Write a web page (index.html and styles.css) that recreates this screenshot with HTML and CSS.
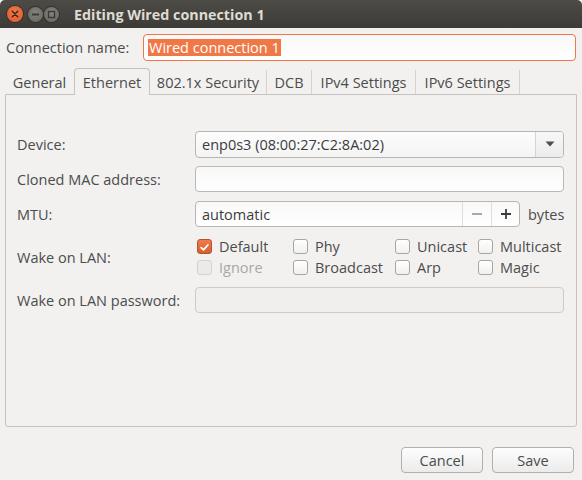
FILE: index.html
```html
<!DOCTYPE html>
<html>
<head>
<meta charset="utf-8">
<link rel="stylesheet" href="styles.css">
</head>
<body>
<div class="window">
  <header class="titlebar">
    <div class="wm-buttons">
      <span class="wm close"><svg width="16" height="16" viewBox="0 0 16 16"><path d="M5.3 5.3 L10.7 10.7 M10.7 5.3 L5.3 10.7" stroke="#3a2a22" stroke-width="1.6" stroke-linecap="round"/></svg></span>
      <span class="wm min"><svg width="15" height="15" viewBox="0 0 15 15"><path d="M4 7.5 H11" stroke="#3c3b37" stroke-width="2"/></svg></span>
      <span class="wm max"><svg width="15" height="15" viewBox="0 0 15 15"><rect x="4.5" y="4.5" width="6" height="6" fill="none" stroke="#3c3b37" stroke-width="1.4"/></svg></span>
    </div>
    <div class="title">Editing Wired connection 1</div>
  </header>

  <div class="name-row">
    <span class="name-label">Connection name:</span>
    <div class="entry focused"><span class="selection">Wired connection 1</span></div>
  </div>

  <div class="notebook">
    <div class="tabs">
      <div class="tab w-general">General</div>
      <div class="tab active w-ethernet">Ethernet</div>
      <div class="tab sep w-security">802.1x Security</div>
      <div class="tab sep w-dcb">DCB</div>
      <div class="tab sep w-ipv4">IPv4 Settings</div>
      <div class="tab sep w-ipv6">IPv6 Settings</div>
    </div>
    <div class="page">
      <div class="form">
        <div class="label">Device:</div>
        <div class="combo">
          <span class="combo-text">enp0s3 (08:00:27:C2:8A:02)</span>
          <span class="combo-btn"><svg width="10" height="6" viewBox="0 0 10 6"><path d="M0.5 0.5 H9.5 L5 5.5 Z" fill="#4c4c4c"/></svg></span>
        </div>

        <div class="label">Cloned MAC address:</div>
        <div class="entry"></div>

        <div class="label">MTU:</div>
        <div class="mtu-row">
          <div class="spin">
            <span class="spin-text">automatic</span>
            <span class="spin-btn"><svg width="12" height="12" viewBox="0 0 12 12"><path d="M1 6 H11" stroke="#a9a9a7" stroke-width="1.8"/></svg></span>
            <span class="spin-btn"><svg width="12" height="12" viewBox="0 0 12 12"><path d="M1 6 H11 M6 1 V11" stroke="#3c3c3c" stroke-width="1.8"/></svg></span>
          </div>
          <span class="unit">bytes</span>
        </div>

        <div class="label">Wake on LAN:</div>
        <div class="checks">
          <label class="check"><span class="box checked"><svg width="15" height="15" viewBox="0 0 15 15"><path d="M3.6 7.6 L6.3 10.3 L11.4 4.6" fill="none" stroke="#fff" stroke-width="2" stroke-linecap="round" stroke-linejoin="round"/></svg></span>Default</label>
          <label class="check"><span class="box"></span>Phy</label>
          <label class="check"><span class="box"></span>Unicast</label>
          <label class="check"><span class="box"></span>Multicast</label>
          <label class="check disabled"><span class="box"></span>Ignore</label>
          <label class="check"><span class="box"></span>Broadcast</label>
          <label class="check"><span class="box"></span>Arp</label>
          <label class="check"><span class="box"></span>Magic</label>
        </div>

        <div class="label">Wake on LAN password:</div>
        <div class="entry disabled"></div>
      </div>
    </div>
  </div>

  <div class="actions">
    <button class="btn">Cancel</button>
    <button class="btn">Save</button>
  </div>
</div>
</body>
</html>
```

FILE: styles.css
```css
* { box-sizing: border-box; }

html, body {
  margin: 0;
  padding: 0;
  background: #f2f1f0;
}

body {
  font-family: "Open Sans", "Noto Sans", sans-serif;
  font-size: 14.5px;
  color: #4c4c4c;
}

.window {
  width: 582px;
  height: 480px;
  display: flex;
  flex-direction: column;
  background: #f2f1f0;
}

/* Title bar */
.titlebar {
  height: 28px;
  flex: none;
  display: flex;
  align-items: center;
  background: linear-gradient(#4d4b46, #3c3b37);
  border-radius: 5px 5px 0 0;
}

.wm-buttons {
  display: flex;
  align-items: center;
  padding-left: 7px;
  width: 74px;
  flex: none;
}

.wm {
  display: flex;
  align-items: center;
  justify-content: center;
  border-radius: 50%;
}

.wm.close {
  width: 16px;
  height: 16px;
  background: radial-gradient(circle at 50% 40%, #f27a4c, #e0572a);
  box-shadow: 0 0 0 1px #3a2f2a;
}

.wm.min, .wm.max {
  width: 15px;
  height: 15px;
  background: radial-gradient(circle at 50% 40%, #85837d, #65635e);
  box-shadow: 0 0 0 1px #33322f;
}

.wm.min { margin-left: 5px; }
.wm.max { margin-left: 1px; }

.title {
  font-weight: bold;
  font-size: 14.3px;
  color: #dfdbd2;
  white-space: nowrap;
}

/* Connection name row */
.name-row {
  flex: none;
  display: flex;
  align-items: center;
  padding: 6px 6px 0 6px;
}

.name-label {
  width: 137px;
  flex: none;
}

.entry {
  height: 26px;
  border: 1px solid #bcb8b3;
  border-radius: 4px;
  background: linear-gradient(#f8f8f8, #ffffff);
  display: flex;
  align-items: center;
}

.entry.focused {
  flex: 1;
  height: 27px;
  border-color: #f07746;
  padding-left: 4px;
}

.entry.disabled {
  background: #f0efee;
  border-color: #cfccc8;
}

.selection {
  background: #f07746;
  color: #ffffff;
  line-height: 17px;
  padding: 0 1px;
}

/* Notebook */
.notebook {
  flex: 1;
  display: flex;
  flex-direction: column;
  margin: 7px 5px 0 5px;
}

.tabs {
  display: flex;
  height: 26px;
  flex: none;
  align-items: flex-end;
}

.tab {
  height: 24px;
  display: flex;
  align-items: center;
  justify-content: center;
  white-space: nowrap;
}

.tab.sep {
  border-right: 1px solid #d6d2cd;
}

.tab.active {
  height: 27px;
  margin-bottom: -1px;
  border: 1px solid #c6c2bd;
  border-bottom: none;
  border-radius: 4px 4px 0 0;
  background: #f2f1f0;
  position: relative;
  z-index: 1;
  padding-top: 1px;
}

.w-general { width: 69px; }
.w-ethernet { width: 76px; }
.w-security { width: 117px; }
.w-dcb { width: 45px; }
.w-ipv4 { width: 104px; }
.w-ipv6 { width: 104px; }

.page {
  flex: 1;
  border: 1px solid #c6c2bd;
  border-radius: 0 0 3px 3px;
  padding: 36px 13px 0 11px;
}

.form {
  display: grid;
  grid-template-columns: 178px 1fr;
  grid-template-rows: 26px 26px 26px 42px 26px;
  row-gap: 9px;
  align-items: center;
}

.label {
  white-space: nowrap;
}

.combo {
  height: 27px;
  display: flex;
  border: 1px solid #b9b5b0;
  border-radius: 4px;
  background: linear-gradient(#fcfcfc, #f4f4f4);
  overflow: hidden;
}

.combo-text {
  flex: 1;
  display: flex;
  align-items: center;
  padding-left: 6px;
  color: #3c3c3c;
}

.combo-btn {
  width: 28px;
  flex: none;
  display: flex;
  align-items: center;
  justify-content: center;
  border-left: 1px solid #d7d4d0;
  background: linear-gradient(#f7f7f7, #ececec);
}

.mtu-row {
  display: flex;
  align-items: center;
}

.spin {
  width: 325px;
  height: 26px;
  display: flex;
  border: 1px solid #b9b5b0;
  border-radius: 4px;
  background: linear-gradient(#f8f8f8, #ffffff);
  overflow: hidden;
}

.spin-text {
  flex: 1;
  display: flex;
  align-items: center;
  padding-left: 6px;
  color: #3c3c3c;
}

.spin-btn {
  width: 29px;
  flex: none;
  display: flex;
  align-items: center;
  justify-content: center;
  border-left: 1px solid #e0ddda;
}

.spin-btn:last-child { width: 28px; }

.unit {
  margin-left: 8px;
}

.checks {
  display: grid;
  grid-template-columns: 96px 102px 83px 1fr;
  grid-template-rows: 21px 21px;
  align-self: stretch;
  margin-left: 2px;
}

.check {
  display: flex;
  align-items: center;
  white-space: nowrap;
}

.check.disabled {
  color: #a8a8a6;
}

.box {
  width: 15px;
  height: 15px;
  flex: none;
  margin-right: 7px;
  border: 1px solid #a9a6a2;
  border-radius: 3px;
  background: linear-gradient(#ffffff, #f0f0f0);
  display: flex;
}

.box.checked {
  border-color: #b4542b;
  background: linear-gradient(#ee7a4e, #d9602f);
}

.check.disabled .box {
  border-color: #d4d2ce;
  background: #ebeae8;
}

/* Action buttons */
.actions {
  flex: none;
  display: flex;
  justify-content: flex-end;
  gap: 9px;
  padding: 20px 8px 7px 0;
}

.btn {
  width: 82px;
  height: 26px;
  font-family: inherit;
  font-size: 14.5px;
  color: #4c4c4c;
  border: 1px solid #b3afaa;
  border-radius: 4px;
  background: linear-gradient(#fdfdfd, #ebebeb);
  padding: 0;
}
```
